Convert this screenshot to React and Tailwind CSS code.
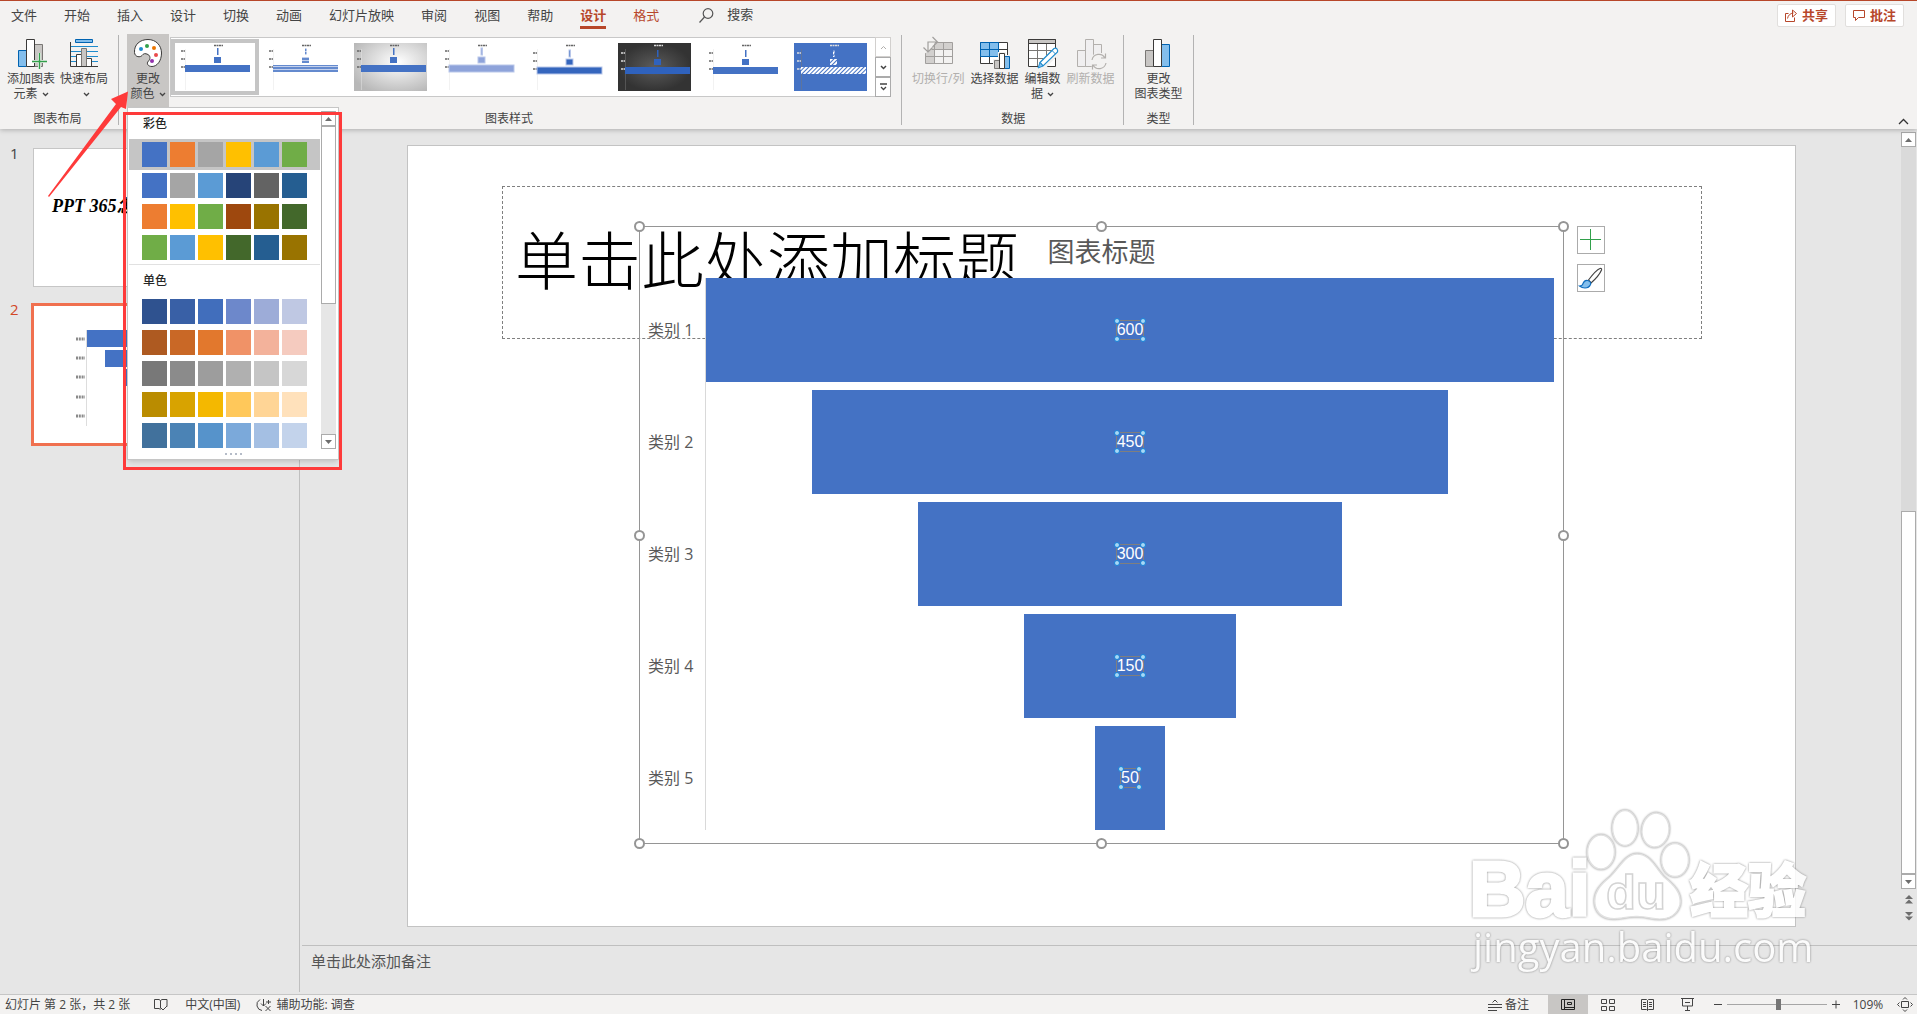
import React from 'react';

const tabs = ['文件', '开始', '插入', '设计', '切换', '动画', '幻灯片放映', '审阅', '视图', '帮助'];

const colorful = [
  ['#4472c4', '#ed7d31', '#a5a5a5', '#ffc000', '#5b9bd5', '#70ad47'],
  ['#4472c4', '#a5a5a5', '#5b9bd5', '#264478', '#636363', '#255e91'],
  ['#ed7d31', '#ffc000', '#70ad47', '#9e480e', '#997300', '#43682b'],
  ['#70ad47', '#5b9bd5', '#ffc000', '#43682b', '#255e91', '#997300'],
];

const mono = [
  ['#2f528f', '#3960a6', '#416ebc', '#6d88cb', '#9dacd8', '#bfc8e3'],
  ['#ae5a21', '#c96826', '#e2782d', '#f09267', '#f3b29b', '#f5cbbf'],
  ['#787878', '#8b8b8b', '#9d9d9d', '#b0b0b0', '#c5c5c5', '#d7d7d7'],
  ['#ba8c00', '#d8a300', '#f4b800', '#ffc85a', '#ffd596', '#ffe1bb'],
  ['#41719c', '#4b83b5', '#5693cb', '#7ba9da', '#a4bfe3', '#c3d3eb'],
];

const data = [
  { name: '类别 1', value: 600 },
  { name: '类别 2', value: 450 },
  { name: '类别 3', value: 300 },
  { name: '类别 4', value: 150 },
  { name: '类别 5', value: 50 },
];

const chartStyles = [
  { bg: '#ffffff', bar: '#4472c4', low: false },
  { bg: '#ffffff', bar: 'url(#stripes)', low: false },
  { bg: 'url(#silver)', bar: '#4472c4', low: false },
  { bg: '#ffffff', bar: '#8ea3da', low: false, soft: true },
  { bg: '#ffffff', bar: '#3566bd', low: true, soft: true },
  { bg: 'url(#dark)', bar: '#2f62bd', low: true, light: true },
  { bg: '#ffffff', bar: '#4472c4', low: true },
  { bg: '#4472c4', bar: 'url(#hatch)', low: true, light: true },
];

const Chevron = () => (
  <svg className="inline-block ml-1 mb-px" width="7" height="5" viewBox="0 0 7 5" fill="none" stroke="currentColor" strokeWidth="1.3">
    <path d="M1 1l2.5 2.5L6 1" />
  </svg>
);

const Icon = ({ children }) => (
  <svg className="block mx-auto overflow-visible" width="32" height="33" viewBox="0 0 32 33" fill="none">
    {children}
  </svg>
);

const AddElementIcon = () => (
  <Icon>
    <path d="M3.5 12.5h8v16h-8z" fill="#83beec" stroke="#0063b1" />
    <path d="M19.5 6.5h8v22h-8z" fill="#c8c6c4" stroke="#797774" />
    <path d="M11.5 1.5h8v27h-8z" fill="#fff" stroke="#3b3a39" />
    <path d="M24.5 15v16M17 23.5h15" stroke="#f3f2f1" strokeWidth="3" />
    <path d="M24.5 15v16M17 23.5h15" stroke="#32a04b" strokeWidth="1.4" />
  </Icon>
);

const QuickLayoutIcon = () => (
  <Icon>
    <path d="M3 8.5h27M3 13.5h27M3 18.5h27M3 23.5h27" stroke="#1e8bcd" />
    <path d="M7.5 1.5h17v3h-17z" fill="#83beec" stroke="#0063b1" />
    <path d="M8.5 16.5h5v12h-5zM18.5 20.5h5v8h-5z" fill="#fff" stroke="#3b3a39" />
    <path d="M13.5 10.5h5v18h-5z" fill="#c8c6c4" stroke="#797774" />
    <path d="M2.500 4v24.500h27.500" stroke="#3b3a39" />
  </Icon>
);

const PaletteIcon = () => (
  <Icon>
    <path
      d="M2.500 14.500C2 6.500 8 1.500 16 1.500C24 1.500 29.500 7.500 29.500 15C29.500 23 25 28.500 20 28.500C16 28.500 14 25.500 16.500 23C18.500 21 18.500 18 16 16.500C13 15 11.500 15.500 10 17.500C8.500 19.500 3 19.500 2.500 14.500Z"
      fill="#fff"
      stroke="#3b3a39"
    />
    <circle cx="9" cy="11" r="2" fill="#1e8bcd" />
    <circle cx="15" cy="8" r="2" fill="#32a04b" />
    <circle cx="22" cy="10" r="2" fill="#eb7500" />
    <circle cx="24" cy="17" r="2" fill="#ea4b4b" />
    <circle cx="20" cy="23" r="2" fill="#9332ad" />
  </Icon>
);

const SwitchIcon = () => (
  <Icon>
    <path d="M3.500 4.500h27v21h-27z" fill="#f3f2f1" />
    <path d="M3.500 4.500h27v7h-18v14h-9z" fill="#d2d0ce" />
    <path d="M3.500 4.500h27v21h-27zM12.500 4.500v21M21.500 4.500v21M3.500 11.500h27M3.500 18.500h27" stroke="#a19f9d" />
    <path d="M0 0h15l-5 11-8 5h-4z" fill="#f3f2f1" />
    <path d="M10.500-1l5 5-5 5M15 4H6v10M1.500 9.500L6 14l4.500-4.500" stroke="#a19f9d" strokeWidth="1.2" />
  </Icon>
);

const SelectDataIcon = () => (
  <Icon>
    <path d="M2.500 4.500h27v21h-27z" fill="#fff" stroke="#3b3a39" />
    <path d="M2.500 18.500h27M11.500 18v7M20.500 4v21M20.500 11.500h9" stroke="#3b3a39" />
    <path d="M2.500 4.500h18v14h-18zM11.500 4.500v14M2.500 11.500h18" fill="#83beec" stroke="#0063b1" />
    <path d="M15 21h5v-7h8v3h5v14H15z" fill="#f3f2f1" />
    <path d="M16.500 22.500h5v8h-5z" fill="#c8c6c4" stroke="#797774" />
    <path d="M26.500 18.500h5v12h-5z" fill="#83beec" stroke="#0063b1" />
    <path d="M21.500 15.500h5v15h-5z" fill="#fff" stroke="#3b3a39" />
  </Icon>
);

const EditDataIcon = () => (
  <Icon>
    <path d="M2.500 1.500h27v27h-27z" fill="#fff" stroke="#3b3a39" />
    <path d="M11.500 5v23M20.500 5v23M3 12.500h26M3 20.500h26" stroke="#797774" />
    <path d="M2.500 1.500h27v4h-27z" fill="#c8c6c4" stroke="#3b3a39" />
    <path d="M13 25L27 11h6v5L18 32h-7z" fill="#f3f2f1" />
    <path d="M14 24.500L28 10.500q2-1 3 .5t.5 3L17 28z" fill="#fff" stroke="#1e8bcd" strokeWidth="1.200" />
    <path d="M14 24.500L17 28l-5 2z" fill="#83beec" stroke="#1e8bcd" />
    <path d="M26 12.500l3.500 3.500" stroke="#1e8bcd" />
  </Icon>
);

const RefreshIcon = () => (
  <Icon>
    <path d="M3.500 12.500h8v16h-8zM19.500 6.500h8v22h-8zM11.500 1.500h8v27h-8z" fill="#f0eff0" stroke="#b3b0ad" />
    <circle cx="25" cy="23.500" r="9" fill="#f3f2f1" />
    <path d="M18 22a7 7 0 0 1 13-2M32 25a7 7 0 0 1-13 2M31.500 15.500V20H27M18.500 31.500V27H23" stroke="#b3b0ad" strokeWidth="1.200" />
  </Icon>
);

const ChartTypeIcon = () => (
  <Icon>
    <path d="M3.500 12.500h8v16h-8z" fill="#c8c6c4" stroke="#797774" />
    <path d="M19.500 6.500h8v22h-8z" fill="#83beec" stroke="#0063b1" />
    <path d="M11.500 1.500h8v27h-8z" fill="#fff" stroke="#3b3a39" />
  </Icon>
);

const RibbonButton = ({ icon, children, disabled }) => (
  <button disabled={disabled} className="self-start pt-1 text-center leading-[15px] whitespace-nowrap disabled:text-[#b1afad]">
    {icon}
    {children}
  </button>
);

const Group = ({ label, className, children }) => (
  <section className={`flex flex-col ${className}`}>
    <div className="flex shrink-0 h-[73px]">{children}</div>
    <h2 className="shrink-0 text-center leading-6">{label}</h2>
  </section>
);

const Separator = () => <div className="w-px h-[90px] mt-px bg-[#b3b3b3]" />;

const StyleThumb = ({ style }) => {
  const y = style.low ? 24 : 22;
  const ink = style.light ? '#dddddd' : '#666666';
  return (
    <svg className="block ml-[3px]" width="73" height="48" viewBox="0 0 73 48">
      <rect width="73" height="48" fill={style.bg} />
      <path d={`M36 2.500h9M3 ${y - 14}h4M3 ${y - 6}h4M3 ${y + 2}h4`} stroke={ink} strokeWidth="1.500" strokeDasharray="2 .5" />
      <path d="M7.500 6v41" stroke={style.light ? '#777777' : '#e4e4e4'} strokeWidth=".5" />
      <g fill={style.bar} stroke={style.soft ? '#b9c7ea' : 'none'}>
        <rect x="39" y={y - 17} width="1.500" height="7" />
        <rect x="36" y={y - 8} width="7" height="6" />
        <rect x="7" y={y} width="65" height="7" />
      </g>
    </svg>
  );
};

const Swatches = ({ rows, selected }) => (
  <div>
    {rows.map((row, i) => (
      <button
        key={i}
        aria-label={`配色 ${i + 1}`}
        className={i === selected ? 'flex gap-[3px] w-full py-[3px] pl-[13px] bg-[#c5c5c5]' : 'flex gap-[3px] w-full py-[3px] pl-[13px]'}
      >
        {row.map((c, j) => (
          <span key={j} className="size-[25px]" style={{ background: c }} />
        ))}
      </button>
    ))}
  </div>
);

const ScrollButton = ({ label, down }) => (
  <button aria-label={label} className="flex items-center justify-center size-[15px] bg-white border border-[#ababab] shrink-0">
    <svg width="7" height="4" viewBox="0 0 7 4" fill="#6d6d6d">
      <path d={down ? 'M0 0h7L3.500 4z' : 'M0 4h7L3.500 0z'} />
    </svg>
  </button>
);

const ColorMenu = () => (
  <div className="absolute top-full left-0 z-20 w-[212px] bg-white border border-[#c6c6c6] shadow-md">
    <div className="flex pt-[3px] pl-px pr-[2px]">
      <div className="flex-1 font-medium text-[#262626]">
        <h3 className="pl-[14px] pb-[2px] leading-[26px]">彩色</h3>
        <Swatches rows={colorful} selected={0} />
        <h3 className="mt-px pl-[14px] border-t border-[#e1e1e1] leading-[31px]">单色</h3>
        <Swatches rows={mono} />
      </div>
      <div className="flex flex-col ml-px mb-[2px] bg-[#e6e6e6]">
        <ScrollButton label="向上滚动" />
        <div className="h-[178px] bg-white border border-[#ababab]" />
        <div className="flex-1" />
        <ScrollButton label="向下滚动" down />
      </div>
    </div>
    <div className="flex justify-center gap-[3px] h-2 pt-[2px]">
      <i className="size-[2px] bg-[#b5bcc8]" />
      <i className="size-[2px] bg-[#b5bcc8]" />
      <i className="size-[2px] bg-[#b5bcc8]" />
      <i className="size-[2px] bg-[#b5bcc8]" />
    </div>
  </div>
);

const Annotation = () => (
  <>
    <div className="absolute -left-1 top-[78px] z-30 w-[219px] h-[358px] border-3 border-[#fe3a3a] pointer-events-none" />
    <svg className="absolute left-[-79px] top-[57px] z-30 pointer-events-none" width="81" height="107" viewBox="48 91 81 107">
      <path d="M48 196L116 104 111 99 128 91.500 126 109 121 107 49 197z" fill="#fe3a3a" />
    </svg>
  </>
);

const Header = () => (
  <header className="relative z-10 bg-[#f3f2f1] border-t border-[#b7472a] shadow-[0_1px_5px_#00000040]">
    <div className="flex items-start h-[33px]">
      <nav className="flex gap-[27px] pl-[11px] text-[13px] leading-[28px]">
        {tabs.map((t) => (
          <button key={t} className="h-7">{t}</button>
        ))}
        <button className="h-7 border-b-3 border-[#b7472a] text-[#b7472a] font-bold leading-[28px]">设计</button>
        <button className="h-7 text-[#b7472a]">格式</button>
      </nav>
      <label className="flex items-center gap-[13px] ml-10 h-7 text-[13px]">
        <svg width="15" height="15" viewBox="0 0 15 15" fill="none" stroke="#555" strokeWidth="1.200">
          <circle cx="9" cy="5.500" r="4.800" />
          <path d="M5.500 9L.5 14.500" />
        </svg>
        <input aria-label="搜索" placeholder="搜索" className="w-28 outline-none placeholder:text-[#444] placeholder:opacity-100" />
      </label>
      <div className="flex gap-[9px] ml-auto pt-[3px] pr-[13px] text-[13px] font-bold text-[#b7472a]">
        <button className="flex items-center gap-1 h-[23px] px-[7px] bg-white border border-[#e1dfdd] rounded-xs">
          <svg width="13" height="13" viewBox="0 0 13 13" fill="none" stroke="currentColor">
            <path d="M3.500 4.500h-3v8h9v-4M2.500 9.500q1-5 6-5.500M7.500 1l4 3.500-4 3.500z" />
          </svg>
          共享
        </button>
        <button className="flex items-center gap-1 h-[23px] px-[7px] bg-white border border-[#e1dfdd] rounded-xs">
          <svg width="13" height="13" viewBox="0 0 13 13" fill="none" stroke="currentColor">
            <path d="M.5 1.500h11v7h-6l-3 3v-3h-2z" />
          </svg>
          批注
        </button>
      </div>
    </div>

    <div className="flex h-[95px]">
      <Group label="图表布局" className="pl-[7px] pr-[10px]">
        <div className="flex gap-[5px]">
          <RibbonButton icon={<AddElementIcon />}>添加图表<br />元素<Chevron /></RibbonButton>
          <RibbonButton icon={<QuickLayoutIcon />}>快速布局<br /><Chevron /></RibbonButton>
        </div>
      </Group>
      <Separator />
      <Group label="图表样式" className="pl-2 pr-[10px]">
        <div className="relative">
          <button aria-expanded="true" className="block w-[42px] h-full pt-1 pb-[6px] bg-[#c8c6c4] leading-[15px]">
            <PaletteIcon />
            更改<br />颜色<Chevron />
          </button>
          <ColorMenu />
          <Annotation />
        </div>
        <div className="flex h-[60px] mt-[3px] ml-px bg-white border border-[#c8c8c8]">
          {chartStyles.map((s, i) => (
            <button
              key={i}
              aria-label={`样式 ${i + 1}`}
              className={i === 0 ? 'w-[88px] my-px border-4 border-[#c5c5c5]' : 'w-[88px] my-px border-4 border-transparent'}
            >
              <StyleThumb style={s} />
            </button>
          ))}
          <div className="flex flex-col w-4 -my-px -mr-px">
            <button disabled aria-label="上一行" className="flex-1 flex items-center justify-center border border-[#d2d0ce] text-[#b1afad]">
              <svg width="7" height="5" fill="none" stroke="currentColor"><path d="M1 4l2.500-2.500L6 4" /></svg>
            </button>
            <button aria-label="下一行" className="flex-1 flex items-center justify-center border border-[#ababab]">
              <svg width="7" height="5" fill="none" stroke="currentColor" strokeWidth="1.500"><path d="M1 1l2.500 2.500L6 1" /></svg>
            </button>
            <button aria-label="其他" className="flex-1 flex items-center justify-center border border-[#ababab]">
              <svg width="7" height="8" fill="none" stroke="currentColor" strokeWidth="1.300"><path d="M0 1h7M1 4l2.500 2.500L6 4" /></svg>
            </button>
          </div>
        </div>
      </Group>
      <Separator />
      <Group label="数据" className="pl-[10px] pr-[9px]">
        <div className="flex items-start gap-[6px]">
          <RibbonButton disabled icon={<SwitchIcon />}>切换行/列</RibbonButton>
          <RibbonButton icon={<SelectDataIcon />}>选择数据</RibbonButton>
          <RibbonButton icon={<EditDataIcon />}>编辑数<br />据<Chevron /></RibbonButton>
          <RibbonButton disabled icon={<RefreshIcon />}>刷新数据</RibbonButton>
        </div>
      </Group>
      <Separator />
      <Group label="类型" className="px-[10px]">
        <RibbonButton icon={<ChartTypeIcon />}>更改<br />图表类型</RibbonButton>
      </Group>
      <Separator />
      <button aria-label="折叠功能区" className="self-end ml-auto mr-2 mb-1">
        <svg width="11" height="7" viewBox="0 0 11 7" fill="none" stroke="#333" strokeWidth="1.300">
          <path d="M1 6l4.500-4.500L10 6" />
        </svg>
      </button>
    </div>
  </header>
);

const SlideList = () => (
  <aside className="w-[300px] shrink-0 mb-[2px] pt-[19px] pl-[10px] border-r border-[#bfbfbf] text-[15px]">
    <div className="flex">
      <span className="w-[23px] leading-[10px]">1</span>
      <div className="w-[246px] h-[139px] bg-white border border-[#c6c6c6] pt-[43px] pl-[18px] overflow-hidden">
        <p className="font-['Liberation_Serif','Noto_Sans_CJK_SC',serif] text-lg font-bold italic text-black">PPT 365怎么</p>
      </div>
    </div>
    <div className="flex mt-4 text-[#d24726]">
      <span className="w-[21px] leading-[12px]">2</span>
      <svg className="w-[250px] h-[143px] bg-white border-3 border-[#f0704f]" viewBox="34 306 244 137">
        <path d="M87 330h150v17H87zM105 350h112v17H105zM125 369h74v17H125zM143 388h37v17h-37zM156 407h12v17h-12z" fill="#4472c4" />
        <path d="M86.500 330v96" stroke="#ddd" />
        <path d="M76 339h9M76 358h9M76 377h9M76 397h9M76 416h9" stroke="#8a8a8a" strokeWidth="3" strokeDasharray="2 .8" />
      </svg>
    </div>
  </aside>
);

const Dot = ({ className }) => (
  <i className={`absolute size-[6px] rounded-full bg-[#a8d8f5] border border-[#1683d8] ${className}`} />
);

const Handle = ({ className }) => (
  <i className={`absolute size-[11px] rounded-full bg-white border-2 border-[#959595] ${className}`} />
);

const Chart = () => (
  <div className="absolute left-[231px] top-[80px] w-[925px] h-[618px] border border-[#959595] text-[#595959]">
    <h2 className="h-[51px] text-center text-[27px] leading-[50px]">图表标题</h2>
    <div className="flex pr-[9px]">
      <div className="flex flex-col gap-2 w-[66px] pl-2 border-r border-[#d9d9d9] text-base">
        {data.map((d) => (
          <span key={d.name} className="flex items-center h-[104px]">{d.name}</span>
        ))}
      </div>
      <div className="flex-1 flex flex-col items-center gap-2">
        {data.map((d) => (
          <div
            key={d.name}
            className="flex items-center justify-center h-[104px] bg-[#4472c4]"
            style={{ width: `${(d.value / data[0].value) * 100}%` }}
          >
            <span className="relative border border-[#7f7f7f] font-['Liberation_Sans',sans-serif] text-base leading-[18px] text-white">
              {d.value}
              <Dot className="-left-[3px] -top-[3px]" />
              <Dot className="-right-[3px] -top-[3px]" />
              <Dot className="-left-[3px] -bottom-[3px]" />
              <Dot className="-right-[3px] -bottom-[3px]" />
            </span>
          </div>
        ))}
      </div>
    </div>
    <Handle className="-left-[6px] -top-[6px]" />
    <Handle className="left-[456px] -top-[6px]" />
    <Handle className="-right-[6px] -top-[6px]" />
    <Handle className="-left-[6px] top-[303px]" />
    <Handle className="-right-[6px] top-[303px]" />
    <Handle className="-left-[6px] -bottom-[6px]" />
    <Handle className="left-[456px] -bottom-[6px]" />
    <Handle className="-right-[6px] -bottom-[6px]" />
    <div className="absolute left-[937px] -top-px flex flex-col gap-[10px]">
      <button aria-label="图表元素" className="size-7 bg-white border border-[#ababab]">
        <svg width="26" height="26" fill="none" stroke="#32a04b"><path d="M12.500 2v21M2 12.500h21" /></svg>
      </button>
      <button aria-label="图表样式" className="size-7 bg-white border border-[#ababab]">
        <svg width="26" height="26" viewBox="0 0 26 26" fill="none">
          <path d="M10.500 15Q18 5 22 3.500q2-.5 1.500 1.500Q21 11 13 18z" fill="#fff" stroke="#444" strokeWidth="1.200" />
          <path d="M1.500 21q3 0 3.500-2.500Q6.500 15 9.500 15.500q4 1 3 4Q11 23 7 23q-3 0-5.500-2z" fill="#83beec" stroke="#0f6cbd" strokeWidth="1.200" />
        </svg>
      </button>
    </div>
  </div>
);

const Slide = () => (
  <div className="relative flex-1 bg-white border border-[#c3c3c3]">
    <h1 className="absolute left-[94px] right-[93px] top-[40px] h-[153px] pl-3 border border-dashed border-[#7f7f7f] text-[63px] leading-[146px] font-light text-black">
      单击此处添加标题
    </h1>
    <Chart />
  </div>
);

const Scrollbar = () => (
  <div className="flex flex-col items-center w-[15px] mt-[3px] mr-px">
    <ScrollButton label="向上" />
    <div className="flex-1 w-full bg-[#dadada]" />
    <div className="w-full h-[363px] bg-white border border-[#ababab]" />
    <ScrollButton label="向下" down />
    <button aria-label="上一张幻灯片" className="mt-[6px]">
      <svg width="8" height="9" fill="#6d6d6d"><path d="M0 4h8L4 0zM0 8.500h8L4 4.500z" /></svg>
    </button>
    <button aria-label="下一张幻灯片" className="mt-2 mb-6">
      <svg width="8" height="9" fill="#6d6d6d"><path d="M0 0h8L4 4zM0 4.500h8L4 8.500z" /></svg>
    </button>
  </div>
);

const StatusBar = () => (
  <footer className="flex items-center h-5 pl-[5px] pr-1 bg-[#f3f2f1] border-t border-[#c6c6c6] leading-[19px] whitespace-nowrap">
    <span>幻灯片 第 2 张，共 2 张</span>
    <button aria-label="拼写检查" className="ml-6">
      <svg width="14" height="13" viewBox="0 0 14 13" fill="none" stroke="#444">
        <path d="M6.500 11.500L5 10.500H.5v-9H5l1.500 1 1.500-1h5v7M6.500 2.500v8M7 10l2 2 4-4" />
      </svg>
    </button>
    <button className="ml-[17px]">中文(中国)</button>
    <button className="flex items-center gap-1 ml-4">
      <svg width="16" height="14" viewBox="0 0 16 14" fill="none" stroke="#444">
        <path d="M4 1.500Q0 4 1 8t5 4.500M7.500 1v7M5 5.500l2.500 2.500L10 5.500M10 4h5M12.500 2v4M9.500 8l5 5M14.500 8l-5 5" />
      </svg>
      辅助功能: 调查
    </button>
    <div className="flex items-center ml-auto">
      <button className="flex items-center gap-[3px] mr-[19px]">
        <svg width="14" height="12" viewBox="0 0 14 12" fill="none" stroke="#444">
          <path d="M4.500 3.500L7 1l2.500 2.500M0 5.500h14M0 8.500h14M0 11.500h9" />
        </svg>
        备注
      </button>
      <button aria-label="普通视图" className="flex items-center justify-center w-10 h-[19px] bg-[#c8c6c4]">
        <svg width="15" height="13" viewBox="0 0 15 13" fill="none" stroke="#222">
          <path d="M.5 1.500h13v10H.5zM3.500 1.500v10M3.500 9.500h10M6.500 4.500h4v2h-4z" />
        </svg>
      </button>
      <button aria-label="幻灯片浏览" className="flex items-center justify-center w-10 h-[19px]">
        <svg width="15" height="13" viewBox="0 0 15 13" fill="none" stroke="#444">
          <path d="M.5 1.500h5v4h-5zM8.500 1.500h5v4h-5zM.5 8.500h5v4h-5zM8.500 8.500h5v4h-5z" />
        </svg>
      </button>
      <button aria-label="阅读视图" className="flex items-center justify-center w-10 h-[19px]">
        <svg width="14" height="13" viewBox="0 0 14 13" fill="none" stroke="#444">
          <path d="M.5 1.500h5l1 1 1-1h5v10h-5l-1 1-1-1h-5zM6.500 2.500v10M2 4.500h3M2 6.500h3M2 8.500h3M8 4.500h3M8 6.500h3M8 8.500h3" />
        </svg>
      </button>
      <button aria-label="幻灯片放映" className="flex items-center justify-center w-10 h-[19px]">
        <svg width="14" height="13" viewBox="0 0 14 13" fill="none" stroke="#444">
          <path d="M0 .5h13M1.500 1v7h10V1M4 4.500h5M6.500 8v4M4 12.500h5" />
        </svg>
      </button>
      <button aria-label="缩小" className="ml-[6px]">
        <svg width="8" height="9" stroke="#444"><path d="M0 4.500h8" /></svg>
      </button>
      <input
        type="range"
        aria-label="显示比例"
        min="0"
        max="100"
        defaultValue="52"
        className="w-[100px] h-px mx-[5px] appearance-none bg-[#a6a6a6] [&::-webkit-slider-thumb]:appearance-none [&::-webkit-slider-thumb]:w-[5px] [&::-webkit-slider-thumb]:h-[11px] [&::-webkit-slider-thumb]:bg-[#767676]"
      />
      <button aria-label="放大">
        <svg width="8" height="9" stroke="#444"><path d="M0 4.500h8M4 .5v8" /></svg>
      </button>
      <button className="ml-3 w-[32px]">109%</button>
      <button aria-label="适应窗口" className="ml-[13px]">
        <svg width="16" height="15" viewBox="0 0 16 15" fill="none" stroke="#444">
          <path d="M4.500 4.500h7v6h-7zM6 2.500l2-2 2 2M6 12.500l2 2 2-2M2.500 5.500l-2 2 2 2M13.500 5.500l2 2-2 2" />
        </svg>
      </button>
    </div>
  </footer>
);

const Watermark = () => (
  <svg
    className="absolute right-[97px] bottom-[35px] z-10 opacity-85 pointer-events-none drop-shadow-[0_0_1px_#777]"
    width="360"
    height="178"
    viewBox="1460 800 360 178"
    fill="#fff"
  >
    <g stroke="#dcdcdc" strokeWidth="1.500">
      <ellipse cx="1601" cy="851" rx="13.500" ry="17" />
      <ellipse cx="1625" cy="827" rx="12.500" ry="17.500" />
      <ellipse cx="1655.500" cy="829" rx="13.500" ry="17" transform="rotate(8 1655 829)" />
      <ellipse cx="1675" cy="859" rx="13.500" ry="16.500" />
      <path d="M1637 853C1626 853 1620 866 1610 876C1600 884 1593 892 1595 904C1598 917 1610 919 1622 917Q1637 914 1650 917C1664 920 1676 917 1680 904C1682 892 1674 884 1664 876C1655 866 1650 853 1637 853Z" />
    </g>
    <g fontFamily="Liberation Sans, Noto Sans CJK SC, sans-serif" fontWeight="bold">
      <text x="1469" y="915" fontSize="78" stroke="#fff" strokeWidth="3">Bai</text>
      <text x="1606" y="908" fontSize="49" stroke="#ccc" strokeWidth="1.500">du</text>
      <text x="1690" y="911" fontSize="58" fontWeight="900" stroke="#fff" strokeWidth="2">经验</text>
    </g>
    <text x="1473" y="961" fontSize="40" fontFamily="Open Sans, sans-serif">jingyan.baidu.com</text>
  </svg>
);

const SharedFills = () => (
  <svg className="absolute size-0">
    <defs>
      <radialGradient id="silver" cx=".6" cy=".4" r=".7">
        <stop offset="0" stopColor="#fff" />
        <stop offset="1" stopColor="#b8b8b8" />
      </radialGradient>
      <radialGradient id="dark">
        <stop offset="0" stopColor="#5c5c5c" />
        <stop offset="1" stopColor="#333" />
      </radialGradient>
      <pattern id="stripes" width="3" height="3" patternUnits="userSpaceOnUse">
        <path d="M0 0h3v3H0z" fill="#c3d0ec" />
        <path d="M0 1h3" stroke="#4472c4" strokeWidth="1.500" />
      </pattern>
      <pattern id="hatch" width="3" height="3" patternUnits="userSpaceOnUse" patternTransform="rotate(45)">
        <path d="M0 0h3v3H0z" fill="#fff" />
        <path d="M0 0v3" stroke="#4472c4" strokeWidth="2" />
      </pattern>
    </defs>
  </svg>
);

export default function App() {
  return (
    <div className="relative flex flex-col min-h-screen bg-[#e6e6e6] text-xs text-[#444] font-['Open_Sans','Noto_Sans_CJK_SC',sans-serif] overflow-hidden">
      <SharedFills />
      <Header />
      <div className="flex flex-1">
        <SlideList />
        <main className="flex-1 flex flex-col">
          <div className="flex flex-1">
            <div className="flex-1 flex flex-col pt-4 pl-[107px] pr-[105px] pb-[18px]">
              <Slide />
            </div>
            <Scrollbar />
          </div>
          <textarea
            aria-label="备注"
            placeholder="单击此处添加备注"
            className="block h-[49px] ml-[2px] px-[9px] py-[3px] border-t border-[#bfbfbf] resize-none outline-none text-[15px] leading-6 placeholder:text-[#555] placeholder:opacity-100"
          />
        </main>
      </div>
      <StatusBar />
      <Watermark />
    </div>
  );
}
